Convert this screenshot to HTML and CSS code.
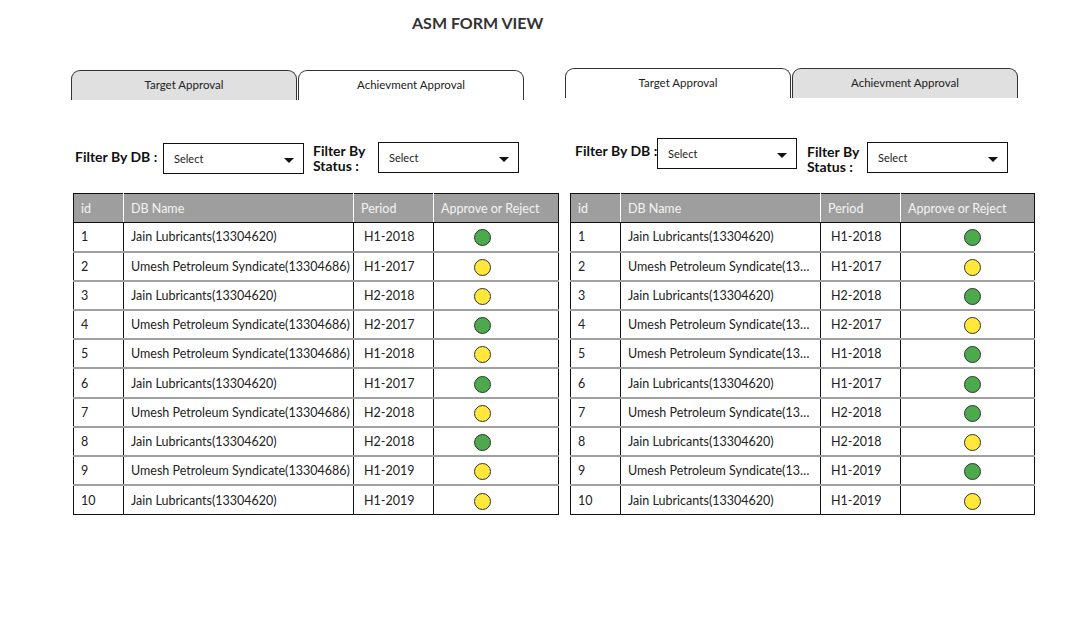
FILE: index.html
```html
<!DOCTYPE html>
<html>
<head>
<meta charset="utf-8">
<link rel="stylesheet" href="styles.css">
</head>
<body>
<h1 class="title">ASM FORM VIEW</h1>
<div class="panels">
  <section class="panel panel-left">
    <div class="tabs">
      <div class="tab tab-off">Target Approval</div>
      <div class="tab tab-on">Achievment Approval</div>
    </div>
    <div class="filters">
      <div class="flabel flabel-db">Filter By DB :</div>
      <div class="select sel-db"><span>Select</span><i class="caret"></i></div>
      <div class="flabel flabel-st">Filter By Status :</div>
      <div class="select sel-st"><span>Select</span><i class="caret"></i></div>
    </div>
    <table class="grid">
      <colgroup><col class="c-id"><col class="c-name"><col class="c-per"><col class="c-act"></colgroup>
      <thead><tr><th>id</th><th>DB Name</th><th>Period</th><th>Approve or Reject</th></tr></thead>
      <tbody>
        <tr><td>1</td><td>Jain Lubricants(13304620)</td><td class="per">H1-2018</td><td class="act"><span class="dot g"></span></td></tr>
        <tr><td>2</td><td>Umesh Petroleum Syndicate(13304686)</td><td class="per">H1-2017</td><td class="act"><span class="dot y"></span></td></tr>
        <tr><td>3</td><td>Jain Lubricants(13304620)</td><td class="per">H2-2018</td><td class="act"><span class="dot y"></span></td></tr>
        <tr><td>4</td><td>Umesh Petroleum Syndicate(13304686)</td><td class="per">H2-2017</td><td class="act"><span class="dot g"></span></td></tr>
        <tr><td>5</td><td>Umesh Petroleum Syndicate(13304686)</td><td class="per">H1-2018</td><td class="act"><span class="dot y"></span></td></tr>
        <tr><td>6</td><td>Jain Lubricants(13304620)</td><td class="per">H1-2017</td><td class="act"><span class="dot g"></span></td></tr>
        <tr><td>7</td><td>Umesh Petroleum Syndicate(13304686)</td><td class="per">H2-2018</td><td class="act"><span class="dot y"></span></td></tr>
        <tr><td>8</td><td>Jain Lubricants(13304620)</td><td class="per">H2-2018</td><td class="act"><span class="dot g"></span></td></tr>
        <tr><td>9</td><td>Umesh Petroleum Syndicate(13304686)</td><td class="per">H1-2019</td><td class="act"><span class="dot y"></span></td></tr>
        <tr><td>10</td><td>Jain Lubricants(13304620)</td><td class="per">H1-2019</td><td class="act"><span class="dot y"></span></td></tr>
      </tbody>
    </table>
  </section>
  <section class="panel panel-right">
    <div class="tabs">
      <div class="tab tab-on">Target Approval</div>
      <div class="tab tab-off">Achievment Approval</div>
    </div>
    <div class="filters">
      <div class="flabel flabel-db">Filter By DB :</div>
      <div class="select sel-db"><span>Select</span><i class="caret"></i></div>
      <div class="flabel flabel-st">Filter By Status :</div>
      <div class="select sel-st"><span>Select</span><i class="caret"></i></div>
    </div>
    <table class="grid">
      <colgroup><col class="c-id"><col class="c-name"><col class="c-per"><col class="c-act"></colgroup>
      <thead><tr><th>id</th><th>DB Name</th><th>Period</th><th>Approve or Reject</th></tr></thead>
      <tbody>
        <tr><td>1</td><td class="name">Jain Lubricants(13304620)</td><td class="per">H1-2018</td><td class="act"><span class="dot g"></span></td></tr>
        <tr><td>2</td><td class="name">Umesh Petroleum Syndicate(13304686)</td><td class="per">H1-2017</td><td class="act"><span class="dot y"></span></td></tr>
        <tr><td>3</td><td class="name">Jain Lubricants(13304620)</td><td class="per">H2-2018</td><td class="act"><span class="dot g"></span></td></tr>
        <tr><td>4</td><td class="name">Umesh Petroleum Syndicate(13304686)</td><td class="per">H2-2017</td><td class="act"><span class="dot y"></span></td></tr>
        <tr><td>5</td><td class="name">Umesh Petroleum Syndicate(13304686)</td><td class="per">H1-2018</td><td class="act"><span class="dot g"></span></td></tr>
        <tr><td>6</td><td class="name">Jain Lubricants(13304620)</td><td class="per">H1-2017</td><td class="act"><span class="dot g"></span></td></tr>
        <tr><td>7</td><td class="name">Umesh Petroleum Syndicate(13304686)</td><td class="per">H2-2018</td><td class="act"><span class="dot g"></span></td></tr>
        <tr><td>8</td><td class="name">Jain Lubricants(13304620)</td><td class="per">H2-2018</td><td class="act"><span class="dot y"></span></td></tr>
        <tr><td>9</td><td class="name">Umesh Petroleum Syndicate(13304686)</td><td class="per">H1-2019</td><td class="act"><span class="dot g"></span></td></tr>
        <tr><td>10</td><td class="name">Jain Lubricants(13304620)</td><td class="per">H1-2019</td><td class="act"><span class="dot y"></span></td></tr>
      </tbody>
    </table>
  </section>
</div>
</body>
</html>
```

FILE: styles.css
```css
* { box-sizing: border-box; }
html, body { margin: 0; padding: 0; background: #fff; }
body {
  width: 1083px;
  height: 628px;
  overflow: hidden;
  font-family: Lato, "Liberation Sans", sans-serif;
  color: #222;
}
.title {
  margin: 0;
  padding: 13px 0 0 412px;
  height: 33px;
  font-size: 16px;
  line-height: 20px;
  font-weight: 700;
  color: #333;
}
.panels {
  display: flex;
  align-items: flex-start;
  padding-left: 71px;
  margin-top: 35px;
}
.panel-left { width: 494px; margin-top: 2px; }
.tabs { display: flex; height: 30px; }
.tab {
  width: 226px;
  height: 30px;
  border: 1px solid #333;
  border-bottom: none;
  border-radius: 9px 9px 0 0;
  font-size: 11.5px;
  line-height: 28px;
  text-align: center;
  color: #222;
}
.tab + .tab { margin-left: 1px; }
.tab-off { background: #e0e0e0; }
.tab-on { background: #fff; }

.filters { display: flex; align-items: flex-start; }
.flabel {
  font-size: 14px;
  font-weight: 700;
  line-height: 15px;
  color: #111;
  white-space: nowrap;
}
.flabel-st { white-space: normal; width: 62px; }
.select {
  width: 141px;
  height: 31px;
  border: 1px solid #111;
  background: #fff;
  display: flex;
  align-items: center;
  justify-content: space-between;
  padding: 0 9px 0 10px;
  font-size: 11px;
  color: #222;
}
.caret {
  width: 0; height: 0;
  border-left: 5px solid transparent;
  border-right: 5px solid transparent;
  border-top: 5px solid #111;
  margin-top: 3px;
}

.panel-left .filters { margin-top: 42px; padding-left: 4px; }
.panel-left .flabel-db { width: 88px; margin-top: 7px; }
.panel-left .sel-db { margin-top: 1px; }
.panel-left .flabel-st { margin-left: 9px; width: 65px; margin-top: 1px; }
.panel-left .sel-st { margin-top: 0; }

.panel-right { margin-left: 0; margin-top: 0; }
.panel-right .filters { margin-top: 40px; padding-left: 10px; }
.panel-right .flabel-db { width: 82px; margin-top: 5px; }
.panel-right .sel-db { margin-top: 0; width: 140px; }
.panel-right .flabel-st { margin-left: 10px; width: 60px; margin-top: 6px; }
.panel-right .sel-st { margin-top: 4px; }

.grid {
  border-collapse: collapse;
  table-layout: fixed;
  border: 1px solid #111;
  font-size: 12.5px;
}
.panel-left .grid { width: 485px; margin: 19px 0 0 2px; }
.panel-right .grid { width: 464px; margin: 19px 0 0 5px; }
.panel-left .c-id { width: 50px; }
.panel-left .c-name { width: 230px; }
.panel-left .c-per { width: 80px; }
.panel-left .c-act { width: 125px; }
.panel-right .c-id { width: 50px; }
.panel-right .c-name { width: 200px; }
.panel-right .c-per { width: 80px; }
.panel-right .c-act { width: 134px; }

.grid th {
  background: #9e9e9e;
  color: #f4f4f4;
  font-weight: 400;
  text-align: left;
  height: 29px;
  padding: 0 7px;
  border-left: 1px solid #fff;
  border-bottom: 1px solid #111;
}
.grid th:first-child { border-left: none; }
.grid td {
  height: 29.2px;
  padding: 0 7px;
  border-left: 1px solid #111;
  border-top: 2px solid #a0a0a0;
  color: #222;
  white-space: nowrap;
}
.grid tbody tr:first-child td { border-top: none; }
.grid td.name { overflow: hidden; text-overflow: ellipsis; }
.grid td.per { padding-left: 10px; }
.panel-left .grid td.act { padding-left: 40px; }
.panel-right .grid td.act { padding-left: 63px; }
.dot {
  display: block;
  width: 17px;
  height: 17px;
  border-radius: 50%;
  border: 1px solid #333;
  margin-top: 2px;
}
.dot.g { background: #4caa4c; }
.dot.y { background: #ffe83a; }
```
